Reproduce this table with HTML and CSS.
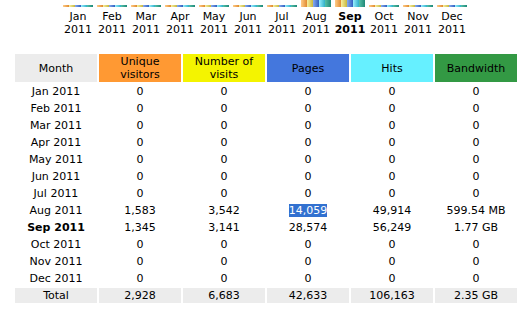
FILE: index.html
```html
<!DOCTYPE html>
<html>
<head>
<meta charset="utf-8">
<link rel="stylesheet" href="styles.css">
</head>
<body>
<div class="chart">
  <div class="col"><div class="bars"><i class="b u z"></i><i class="b v z"></i><i class="b p z"></i><i class="b h z"></i><i class="b k z"></i></div><div class="lbl">Jan<br>2011</div></div>
  <div class="col"><div class="bars"><i class="b u z"></i><i class="b v z"></i><i class="b p z"></i><i class="b h z"></i><i class="b k z"></i></div><div class="lbl">Feb<br>2011</div></div>
  <div class="col"><div class="bars"><i class="b u z"></i><i class="b v z"></i><i class="b p z"></i><i class="b h z"></i><i class="b k z"></i></div><div class="lbl">Mar<br>2011</div></div>
  <div class="col"><div class="bars"><i class="b u z"></i><i class="b v z"></i><i class="b p z"></i><i class="b h z"></i><i class="b k z"></i></div><div class="lbl">Apr<br>2011</div></div>
  <div class="col"><div class="bars"><i class="b u z"></i><i class="b v z"></i><i class="b p z"></i><i class="b h z"></i><i class="b k z"></i></div><div class="lbl">May<br>2011</div></div>
  <div class="col"><div class="bars"><i class="b u z"></i><i class="b v z"></i><i class="b p z"></i><i class="b h z"></i><i class="b k z"></i></div><div class="lbl">Jun<br>2011</div></div>
  <div class="col"><div class="bars"><i class="b u z"></i><i class="b v z"></i><i class="b p z"></i><i class="b h z"></i><i class="b k z"></i></div><div class="lbl">Jul<br>2011</div></div>
  <div class="col"><div class="bars"><i class="b u t"></i><i class="b v t"></i><i class="b p t"></i><i class="b h t"></i><i class="b k t"></i></div><div class="lbl">Aug<br>2011</div></div>
  <div class="col"><div class="bars"><i class="b u t"></i><i class="b v t"></i><i class="b p t"></i><i class="b h t"></i><i class="b k t"></i></div><div class="lbl cur">Sep<br>2011</div></div>
  <div class="col"><div class="bars"><i class="b u z"></i><i class="b v z"></i><i class="b p z"></i><i class="b h z"></i><i class="b k z"></i></div><div class="lbl">Oct<br>2011</div></div>
  <div class="col"><div class="bars"><i class="b u z"></i><i class="b v z"></i><i class="b p z"></i><i class="b h z"></i><i class="b k z"></i></div><div class="lbl">Nov<br>2011</div></div>
  <div class="col"><div class="bars"><i class="b u z"></i><i class="b v z"></i><i class="b p z"></i><i class="b h z"></i><i class="b k z"></i></div><div class="lbl">Dec<br>2011</div></div>
</div>
<table class="stats">
  <thead>
    <tr>
      <th class="hm">Month</th>
      <th class="hu">Unique<br>visitors</th>
      <th class="hv">Number of<br>visits</th>
      <th class="hp">Pages</th>
      <th class="hh">Hits</th>
      <th class="hk">Bandwidth</th>
    </tr>
  </thead>
  <tbody>
    <tr><td>Jan 2011</td><td>0</td><td>0</td><td>0</td><td>0</td><td>0</td></tr>
    <tr><td>Feb 2011</td><td>0</td><td>0</td><td>0</td><td>0</td><td>0</td></tr>
    <tr><td>Mar 2011</td><td>0</td><td>0</td><td>0</td><td>0</td><td>0</td></tr>
    <tr><td>Apr 2011</td><td>0</td><td>0</td><td>0</td><td>0</td><td>0</td></tr>
    <tr><td>May 2011</td><td>0</td><td>0</td><td>0</td><td>0</td><td>0</td></tr>
    <tr><td>Jun 2011</td><td>0</td><td>0</td><td>0</td><td>0</td><td>0</td></tr>
    <tr><td>Jul 2011</td><td>0</td><td>0</td><td>0</td><td>0</td><td>0</td></tr>
    <tr><td>Aug 2011</td><td>1,583</td><td>3,542</td><td><span class="sel">14,059</span></td><td>49,914</td><td>599.54 MB</td></tr>
    <tr><td class="cur">Sep 2011</td><td>1,345</td><td>3,141</td><td>28,574</td><td>56,249</td><td>1.77 GB</td></tr>
    <tr><td>Oct 2011</td><td>0</td><td>0</td><td>0</td><td>0</td><td>0</td></tr>
    <tr><td>Nov 2011</td><td>0</td><td>0</td><td>0</td><td>0</td><td>0</td></tr>
    <tr><td>Dec 2011</td><td>0</td><td>0</td><td>0</td><td>0</td><td>0</td></tr>
  </tbody>
  <tfoot>
    <tr class="tot"><td>Total</td><td>2,928</td><td>6,683</td><td>42,633</td><td>106,163</td><td>2.35 GB</td></tr>
  </tfoot>
</table>
</body>
</html>
```
FILE: styles.css
```css
html, body {
  margin: 0;
  padding: 0;
  background: #ffffff;
}
body {
  font-family: "DejaVu Sans", Verdana, sans-serif;
  font-size: 11px;
  color: #000000;
  width: 524px;
  height: 314px;
  overflow: hidden;
}
.chart {
  display: flex;
  gap: 4px;
  padding-left: 63px;
}
.col {
  width: 30px;
  display: flex;
  flex-direction: column;
  align-items: center;
}
.bars {
  display: flex;
  align-items: flex-end;
  height: 7px;
  width: 30px;
}
.b {
  display: block;
  width: 6px;
}
.b.z { height: 2px; }
.b.t { height: 7px; }
.b.u { background: linear-gradient(90deg, #ffcc88, #e08a30); }
.b.v { background: linear-gradient(90deg, #f8f0a0, #c8b840); }
.b.p { background: linear-gradient(90deg, #88aaee, #3060c0); }
.b.h { background: linear-gradient(90deg, #99eeff, #30b0c8); }
.b.k { background: linear-gradient(90deg, #55c0a8, #208878); }
.lbl {
  margin-top: 3px;
  line-height: 13px;
  text-align: center;
  white-space: nowrap;
  width: 30px;
  display: flex;
  flex-direction: column;
  align-items: center;
}
.cur { font-weight: bold; }
.stats {
  margin: 16px 0 0 13px;
  border-collapse: separate;
  border-spacing: 2px;
  font-size: 11px;
  table-layout: fixed;
}
.stats th {
  width: 82px;
  height: 28px;
  padding: 0;
  font-weight: normal;
  line-height: 13px;
  text-align: center;
  vertical-align: middle;
}
.stats td {
  height: 15px;
  padding: 0;
  line-height: 15px;
  text-align: center;
  white-space: nowrap;
}
.hm { background: #ececec; }
.hu { background: #ff9933; }
.hv { background: #f4f400; }
.hp { background: #4477dd; }
.hh { background: #66f0ff; }
.hk { background: #339944; }
.tot td { background: #ececec; }
.sel {
  background: #3271d0;
  color: #ffffff;
}
```
